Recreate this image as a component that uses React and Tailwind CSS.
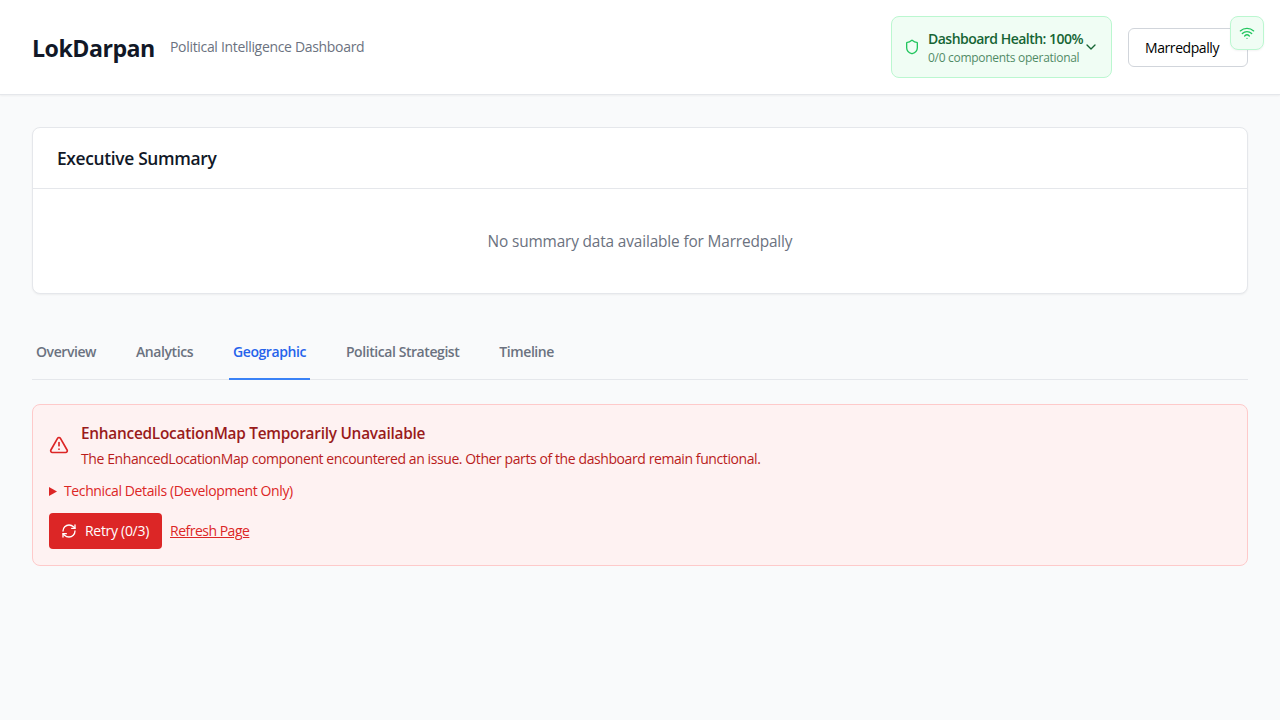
import React from "react";
import { Shield, ChevronDown, Wifi, AlertTriangle, RefreshCw } from "lucide-react";

const tabs = ["Overview", "Analytics", "Geographic", "Political Strategist", "Timeline"];

function Header() {
  return (
    <header className="flex h-[95px] items-center justify-between border-b border-[#e5e7eb] bg-white px-8 shadow-xs">
      <div className="flex items-center gap-4">
        <h1 className="w-[122px] pt-0.5 text-[23.2px] leading-8 font-bold tracking-[-0.52px] text-[#111827]">LokDarpan</h1>
        <span className="text-sm tracking-[-0.32px] text-[#6b7280]">Political Intelligence Dashboard</span>
      </div>
      <div className="flex items-center gap-4">
        <div className="flex h-[62px] w-[221px] items-center rounded-lg border border-[#bbf7d0] bg-[#f0fdf4] px-3 whitespace-nowrap">
          <Shield className="size-4 shrink-0 text-[#22c55e]" />
          <div className="ml-2 w-[155px] shrink-0">
            <div className="text-sm font-semibold tracking-[-0.52px] text-[#166534]">Dashboard Health: 100%</div>
            <div className="pt-px text-xs leading-[15px] tracking-[-0.29px] text-[#166534] opacity-75">0/0 components operational</div>
          </div>
          <ChevronDown className="size-4 shrink-0 text-[#166534]" />
        </div>
        <button className="h-[39px] w-[120px] rounded-md border border-[#d1d5db] bg-white px-4 pt-0.5 text-left text-sm tracking-[-0.42px] text-black">
          Marredpally
        </button>
      </div>
    </header>
  );
}

export default function App() {
  return (
    <div className="min-h-screen bg-[#f9fafb] font-['Open_Sans','Noto_Sans',sans-serif]">
      <Header />
      <div className="fixed top-4 right-4 rounded-lg border border-[#bbf7d0] bg-[#f0fdf4] p-2 shadow-xs">
        <Wifi className="size-4 text-[#22c55e]" />
      </div>
      <main className="px-8 py-8">
        <section className="mb-8 rounded-lg border border-[#e5e7eb] bg-white shadow-xs">
          <div className="border-b border-[#e5e7eb] px-6 py-4">
            <h2 className="text-[17.4px] leading-7 font-semibold tracking-[-0.34px] text-[#111827]">Executive Summary</h2>
          </div>
          <p className="pt-[41px] pb-[39px] text-center text-[15.4px] leading-6 tracking-[-0.15px] text-[#6b7280]">
            No summary data available for Marredpally
          </p>
        </section>
        <nav className="mb-6 flex gap-8 border-b border-[#e5e7eb]">
          {tabs.map((tab) => (
            <button
              key={tab}
              className={
                tab === "Geographic"
                  ? "-mb-px border-b-2 border-[#3b82f6] px-1 py-4 text-sm font-semibold tracking-[-0.43px] text-[#2563eb]"
                  : "-mb-px border-b-2 border-transparent px-1 py-4 text-sm font-semibold tracking-[-0.43px] text-[#6b7280]"
              }
            >
              {tab}
            </button>
          ))}
        </nav>
        <section className="rounded-lg border border-[#fecaca] bg-[#fef2f2] p-4">
          <div className="mb-3 flex items-center gap-3">
            <AlertTriangle className="size-5 shrink-0 text-[#dc2626]" />
            <div>
              <h3 className="pt-px text-[15.4px] leading-6 font-semibold tracking-[-0.26px] text-[#991b1b]">EnhancedLocationMap Temporarily Unavailable</h3>
              <p className="mt-[3px] text-sm tracking-[-0.41px] text-[#b91c1c]">
                The EnhancedLocationMap component encountered an issue. Other parts of the dashboard remain functional.
              </p>
            </div>
          </div>
          <div className="mb-3 flex items-center text-sm tracking-[-0.38px] text-[#dc2626]">
            <svg className="mr-[7px] h-[9px] w-2" viewBox="0 0 8 9" fill="currentColor">
              <path d="M0 0L8 4.5L0 9Z" />
            </svg>
            <span>Technical Details (Development Only)</span>
          </div>
          <div className="flex items-center gap-2">
            <button className="flex h-9 w-[113px] items-center gap-2 rounded bg-[#dc2626] px-3 text-sm tracking-[-0.3px] whitespace-nowrap text-white">
              <RefreshCw className="size-4 shrink-0" />
              <span>Retry (0/3)</span>
            </button>
            <button className="text-sm tracking-[-0.5px] text-[#dc2626] underline">Refresh Page</button>
          </div>
        </section>
      </main>
    </div>
  );
}
